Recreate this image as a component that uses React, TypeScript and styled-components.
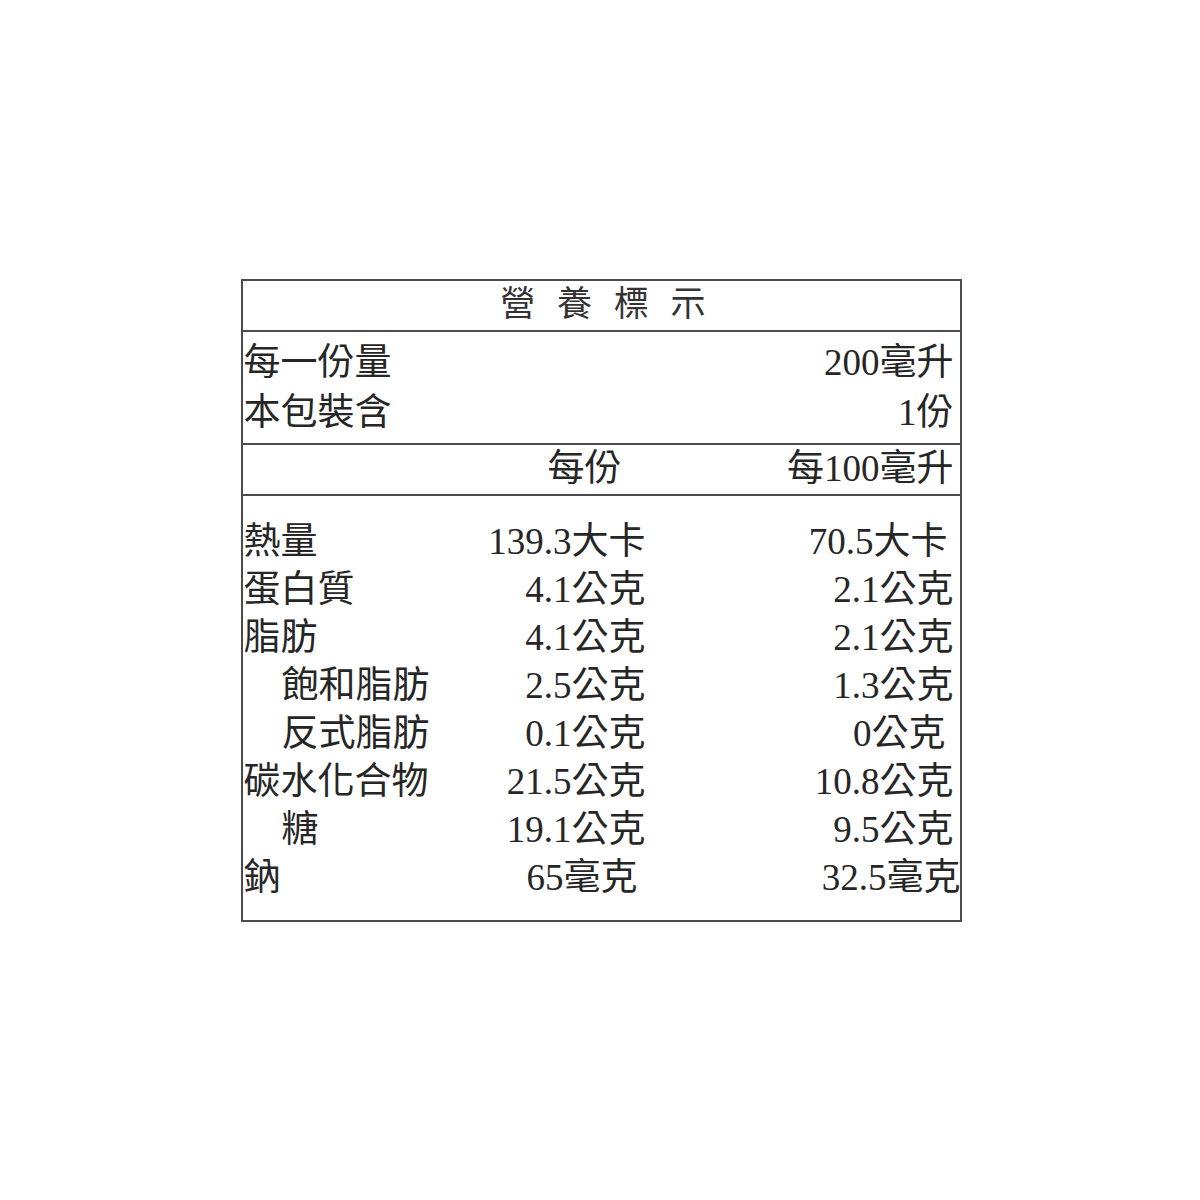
import React from "react";
import styled, { createGlobalStyle } from "styled-components";

const Global = createGlobalStyle`
  html, body { margin: 0; padding: 0; background: #ffffff; }
  #root { width: 1200px; }
`;

const Page = styled.div`
  width: 1200px;
  height: 1200px;
  display: flex;
  align-items: center;
  justify-content: center;
  background: #ffffff;
`;

const Label = styled.div`
  box-sizing: border-box;
  width: 721px;
  height: 643px;
  margin-left: 2px;
  border: 2px solid #4c4c4c;
  display: flex;
  flex-direction: column;
  font-family: "Liberation Serif", "Noto Sans CJK TC", serif;
  font-size: 37px;
  color: #262626;
  line-height: 48px;
`;

const Title = styled.div`
  height: 49px;
  border-bottom: 2px solid #4c4c4c;
  display: flex;
  align-items: center;
  justify-content: center;
  font-size: 35px;
  word-spacing: 13px;
  padding-left: 4px;
  color: #333333;
`;

const Section = styled.div<{ $h: number; $pt: number }>`
  box-sizing: border-box;
  height: ${(p) => p.$h}px;
  padding-top: ${(p) => p.$pt}px;
  padding-right: 6px;
  padding-left: 1px;
  border-bottom: 2px solid #4c4c4c;
`;

const DataSection = styled.div`
  flex: 1;
  padding: 22px 6px 0 1px;
  display: flex;
  flex-direction: column;
`;

const PairRow = styled.div`
  display: flex;
  justify-content: space-between;
  height: 50px;
  align-items: center;
`;

const Grid = styled.div`
  display: grid;
  grid-template-columns: 216px 186px 1fr;
  height: 48px;
  align-items: center;
`;

const Name = styled.div<{ $indent?: boolean }>`
  padding-left: ${(p) => (p.$indent ? 38 : 0)}px;
  white-space: nowrap;
`;

const Value = styled.div<{ $nudge?: number }>`
  text-align: right;
  white-space: nowrap;
  margin-right: ${(p) => p.$nudge ?? 0}px;
`;

type Row = { name: string; indent?: boolean; a: string; b: string; na?: number; nb?: number };

const rows: Row[] = [
  { name: "熱量", a: "139.3大卡", b: "70.5大卡", nb: 6 },
  { name: "蛋白質", a: "4.1公克", b: "2.1公克" },
  { name: "脂肪", a: "4.1公克", b: "2.1公克" },
  { name: "飽和脂肪", indent: true, a: "2.5公克", b: "1.3公克" },
  { name: "反式脂肪", indent: true, a: "0.1公克", b: "0公克", nb: 8 },
  { name: "碳水化合物", a: "21.5公克", b: "10.8公克" },
  { name: "糖", indent: true, a: "19.1公克", b: "9.5公克" },
  { name: "鈉", a: "65毫克", b: "32.5毫克", na: 8, nb: -7 },
];

export default function App() {
  return (
    <>
      <Global />
      <Page>
        <Label>
          <Title>營 養 標 示</Title>
          <Section $h={113} $pt={6}>
            <PairRow>
              <span>每一份量</span>
              <span>200毫升</span>
            </PairRow>
            <PairRow>
              <span>本包裝含</span>
              <span>1份</span>
            </PairRow>
          </Section>
          <Section $h={51} $pt={0}>
            <Grid>
              <Name />
              <Value $nudge={24}>每份</Value>
              <Value>每100毫升</Value>
            </Grid>
          </Section>
          <DataSection>
            {rows.map((r) => (
              <Grid key={r.name}>
                <Name $indent={r.indent}>{r.name}</Name>
                <Value $nudge={r.na}>{r.a}</Value>
                <Value $nudge={r.nb}>{r.b}</Value>
              </Grid>
            ))}
          </DataSection>
        </Label>
      </Page>
    </>
  );
}
